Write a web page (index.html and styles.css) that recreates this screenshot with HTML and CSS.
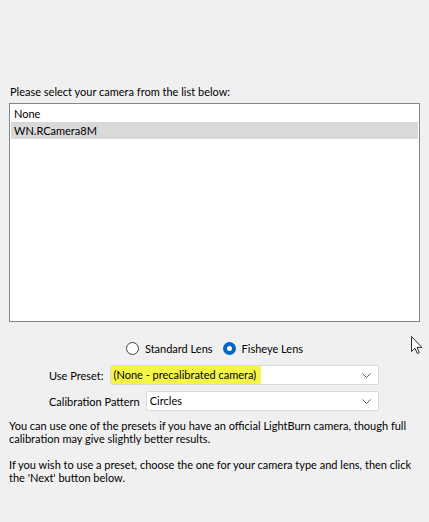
FILE: index.html
```html
<!DOCTYPE html>
<html lang="en">
<head>
    <meta charset="utf-8">
    <title>Camera Calibration</title>
    <link rel="stylesheet" href="styles.css">
</head>
<body>
<div class="wizard">
    <div class="prompt">Please select your camera from the list below:</div>
    <div class="camera-list">
        <div class="item">None</div>
        <div class="item selected">WN.RCamera8M</div>
    </div>

    <div class="lens-row">
        <label class="radio"><span class="circle"></span>Standard Lens</label>
        <label class="radio"><span class="circle checked"></span>Fisheye Lens</label>
    </div>

    <div class="field">
        <span class="field-label">Use Preset:</span>
        <div class="combo">
            <span class="combo-text highlight">(None - precalibrated camera)</span>
            <svg class="chevron" width="9" height="5" viewBox="0 0 9 5"><path d="M0.5 0.5 L4.5 4.5 L8.5 0.5" fill="none" stroke="#606060" stroke-width="1"/></svg>
        </div>
    </div>
    <div class="field">
        <span class="field-label">Calibration Pattern</span>
        <div class="combo">
            <span class="combo-text">Circles</span>
            <svg class="chevron" width="9" height="5" viewBox="0 0 9 5"><path d="M0.5 0.5 L4.5 4.5 L8.5 0.5" fill="none" stroke="#606060" stroke-width="1"/></svg>
        </div>
    </div>

    <p class="note">You can use one of the presets if you have an official LightBurn camera, though full calibration may give slightly better results.</p>
    <p class="note">If you wish to use a preset, choose the one for your camera type and lens, then click the 'Next' button below.</p>
</div>

<!-- mouse pointer that was caught in the screenshot -->
<svg class="pointer" width="12" height="19" viewBox="0 0 12 19">
    <path d="M0.5 0.5 L0.5 15.5 L4 12.2 L6.3 17.5 L8.3 16.6 L6 11.4 L10.8 11.4 Z" fill="#ffffff" stroke="#2b2b2b" stroke-width="1" stroke-linejoin="round"/>
</svg>
</body>
</html>
```

FILE: styles.css
```css
* {
    margin: 0px;
    padding: 0px;
    box-sizing: border-box;
}

body {
    background-color: #f0f0f0;
    font-family: Lato, 'Noto Sans', sans-serif;
    font-size: 11px;
    color: #000;
    position: relative;
    width: 429px;
    height: 522px;
    overflow: hidden;
}

.wizard {
    padding: 84px 9px 0 9px;
}

.prompt {
    line-height: 15px;
    padding-left: 1px;
}

.camera-list {
    margin-top: 4px;
    height: 219px;
    background-color: #fff;
    border: 1px solid #828790;
    padding: 1px;
}

.camera-list .item {
    height: 17px;
    line-height: 17px;
    padding-left: 3px;
}

.camera-list .item.selected {
    background-color: #d9d9d9;
}

.lens-row {
    display: flex;
    justify-content: center;
    gap: 10px;
    margin-top: 19px;
    height: 15px;
    align-items: center;
}

.radio {
    display: flex;
    align-items: center;
    gap: 6px;
}

.circle {
    width: 13px;
    height: 13px;
    border-radius: 50%;
    border: 1px solid #444;
    background-color: #fff;
}

.circle.checked {
    border: 4px solid #0067c0;
    background-color: #fff;
}

.field {
    display: flex;
    align-items: center;
    gap: 6px;
    padding: 0 41px 0 40px;
    margin-top: 9px;
}

.field + .field {
    margin-top: 6px;
}

.field-label {
    white-space: nowrap;
}

.combo {
    flex: 1;
    height: 20px;
    display: flex;
    align-items: center;
    justify-content: space-between;
    background-color: #fff;
    border: 1px solid #d9d9d9;
    border-radius: 2px;
    padding: 0 7px 0 0;
}

.combo-text {
    padding-left: 3px;
    line-height: 18px;
}

.combo-text.highlight {
    background-color: #f5f545;
    border-radius: 2px;
    padding-right: 5px;
}

.note {
    margin-top: 8px;
    line-height: 13px;
    padding-right: 4px;
}

.note + .note {
    margin-top: 13px;
}

.pointer {
    position: absolute;
    left: 411px;
    top: 336px;
}
```
